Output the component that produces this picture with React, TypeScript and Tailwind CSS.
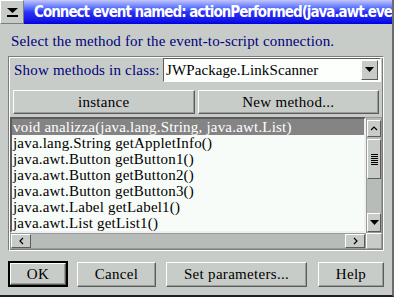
import React from "react";

const serif = { fontFamily: '"Liberation Serif", "DejaVu Serif", serif' };

const methods = [
  "void analizza(java.lang.String, java.awt.List)",
  "java.lang.String getAppletInfo()",
  "java.awt.Button getButton1()",
  "java.awt.Button getButton2()",
  "java.awt.Button getButton3()",
  "java.awt.Label getLabel1()",
  "java.awt.List getList1()",
];

function Btn({ children, className = "" }: { children: React.ReactNode; className?: string }) {
  return (
    <div
      className={
        "flex items-center justify-center border border-t-white border-l-white border-b-[#5c5c5c] border-r-[#5c5c5c] bg-[#c8ccc8] text-[15px] tracking-[0.3px] text-black shadow-[inset_-1px_-1px_0_#9a9c9a] " +
        className
      }
    >
      {children}
    </div>
  );
}

function ArrowBox({ children, className = "" }: { children: React.ReactNode; className?: string }) {
  return (
    <div
      className={
        "flex items-center justify-center border border-t-white border-l-white border-b-[#5c5c5c] border-r-[#5c5c5c] bg-[#c8ccc8] " +
        className
      }
    >
      {children}
    </div>
  );
}

export default function App() {
  return (
    <div className="flex h-[297px] w-[394px] flex-col overflow-hidden border-b-2 border-r-2 border-b-[#202020] border-r-[#6c6c6c] bg-[#c8ccc8]" style={serif}>
      {/* title bar */}
      <div className="flex h-[24px] shrink-0">
        <div className="flex w-[24px] flex-col items-center justify-center border border-t-white border-l-white border-b-[#7c7c7c] border-r-[#7c7c7c] bg-[#c8ccc8]">
          <svg width="11" height="9" viewBox="0 0 11 9">
            <polygon points="0,0 11,0 5.5,5" fill="#000" />
            <rect x="0" y="7" width="11" height="2" fill="#000" />
          </svg>
        </div>
        <div
          className="flex flex-1 items-center overflow-hidden whitespace-nowrap bg-gradient-to-b from-[#c4c4fc] via-[#3030f8] to-[#0000e0] pl-[10px] text-[15px] font-bold tracking-[-1px] text-white"
          style={{ fontFamily: '"DejaVu Sans Condensed", "Liberation Sans", sans-serif' }}
        >
          Connect event named: actionPerformed(java.awt.event)
        </div>
      </div>

      <div className="pl-[11px] pt-[8px] text-[15px] leading-[18px] tracking-[0.15px] text-[#00007c]">
        Select the method for the event-to-script connection.
      </div>

      {/* group */}
      <div className="mx-[8px] mt-[6px] flex flex-col border border-t-[#7c7c7c] border-l-[#7c7c7c] border-b-white border-r-white shadow-[inset_1px_1px_0_#fff,inset_-1px_-1px_0_#7c7c7c]">
        <div className="flex items-center pl-[5px] pr-[2px] pt-[1px]">
          <span className="text-[15px] tracking-[0.2px] text-[#00007c]">Show methods in class:</span>
          <div className="ml-auto flex h-[24px] w-[218px] items-center border border-t-[#5c5c5c] border-l-[#5c5c5c] border-b-white border-r-white bg-[#fcfffc] pl-[2px]">
            <span className="flex-1 text-[15px] tracking-[0.1px] text-black">JWPackage.LinkScanner</span>
            <ArrowBox className="mr-[2px] h-[20px] w-[17px]">
              <svg width="9" height="6" viewBox="0 0 9 6">
                <polygon points="0,0 9,0 4.5,5" fill="#000" />
              </svg>
            </ArrowBox>
          </div>
        </div>
        <div className="flex gap-[3px] px-[4px] pt-[8px]">
          <Btn className="h-[24px] flex-1">instance</Btn>
          <Btn className="h-[24px] flex-1">New method...</Btn>
        </div>

        {/* list */}
        <div className="mt-[3px] flex flex-col px-[1px] pb-[1px]">
          <div className="flex">
            <div className="h-[116px] flex-1 overflow-hidden border-2 border-t-[#5c5c5c] border-l-[#5c5c5c] border-b-[#f0f0f0] border-r-[#f0f0f0] bg-[#f8fcf8] text-[15px] tracking-[0.2px]">
              {methods.map((m, i) => (
                <div
                  key={m}
                  className={
                    "h-[16px] whitespace-nowrap pl-[1px] leading-[16px] " +
                    (i === 0 ? "bg-[#848484] text-white" : "text-black")
                  }
                >
                  {m}
                </div>
              ))}
            </div>
            <div className="flex w-[16px] flex-col border border-[#9a9a9a] bg-[#b8bcb8]">
              <ArrowBox className="mt-[2px] h-[17px]">
                <svg width="8" height="5" viewBox="0 0 8 5">
                  <polyline points="1,4 4,1 7,4" fill="none" stroke="#000" strokeWidth="1.2" />
                </svg>
              </ArrowBox>
              <ArrowBox className="mt-[2px] h-[40px] flex-col gap-[1px]">
                {[0, 1, 2, 3, 4, 5].map((k) => (
                  <div key={k} className="h-[1px] w-[7px] bg-black" />
                ))}
              </ArrowBox>
              <div className="flex-1" />
              <ArrowBox className="h-[19px]">
                <svg width="9" height="6" viewBox="0 0 9 6">
                  <polygon points="0,0 9,0 4.5,5" fill="#000" />
                </svg>
              </ArrowBox>
            </div>
          </div>
          <div className="flex h-[16px]">
            <div className="flex flex-1 border border-[#9a9a9a] bg-[#b8bcb8]">
              <ArrowBox className="w-[20px]">
                <svg width="5" height="8" viewBox="0 0 5 8">
                  <polyline points="4,1 1,4 4,7" fill="none" stroke="#000" strokeWidth="1.2" />
                </svg>
              </ArrowBox>
              <div className="flex-1" />
              <ArrowBox className="w-[20px]">
                <svg width="5" height="8" viewBox="0 0 5 8">
                  <polyline points="1,1 4,4 1,7" fill="none" stroke="#000" strokeWidth="1.2" />
                </svg>
              </ArrowBox>
            </div>
            <div className="w-[16px] border border-t-white border-l-white border-b-[#9a9a9a] border-r-[#9a9a9a]" />
          </div>
        </div>
      </div>

      {/* bottom buttons */}
      <div className="mt-[10px] flex items-center px-[8px]">
        <div className="border-2 border-black">
          <Btn className="h-[22px] w-[56px]">OK</Btn>
        </div>
        <Btn className="ml-[9px] h-[25px] w-[79px]">Cancel</Btn>
        <Btn className="ml-[10px] h-[25px] w-[141px]">Set parameters...</Btn>
        <Btn className="ml-[11px] h-[25px] w-[66px]">Help</Btn>
      </div>
    </div>
  );
}
